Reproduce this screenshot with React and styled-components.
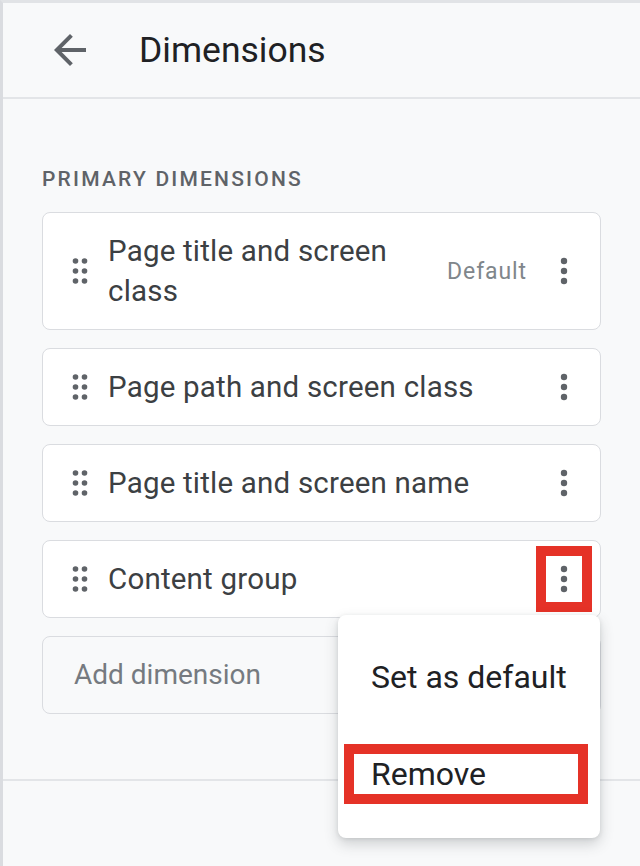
import React from "react";
import styled, { createGlobalStyle } from "styled-components";

const GlobalStyle = createGlobalStyle`
  html, body {
    margin: 0;
    padding: 0;
    background: #f8f9fa;
  }
  body {
    font-family: Roboto, "Liberation Sans", Arial, sans-serif;
    -webkit-font-smoothing: antialiased;
  }
  * { box-sizing: border-box; }
`;

const Page = styled.div`
  min-height: 866px;
  background: #f8f9fa;
  border-top: 3px solid #e1e3e6;
  border-left: 3px solid #dadce0;
`;

const Header = styled.div`
  display: flex;
  align-items: center;
  height: 96px;
  padding-left: 43px;
  border-bottom: 2px solid #e3e5e8;
`;

const BackButton = styled.button`
  display: flex;
  align-items: center;
  justify-content: center;
  width: 48px;
  height: 48px;
  padding: 0;
  border: none;
  background: none;
  color: #5f6368;
  cursor: pointer;
`;

const Title = styled.h1`
  margin: 0 0 0 45px;
  font-size: 35.5px;
  font-weight: 400;
  color: #202124;
`;

const Body = styled.div`
  padding: 68px 39px 65px;
  border-bottom: 2px solid #e3e5e8;
`;

const SectionLabel = styled.div`
  font-size: 21px;
  line-height: 24px;
  font-weight: 500;
  letter-spacing: 2.2px;
  color: #5f6368;
  margin-bottom: 21px;
`;

const List = styled.div`
  display: flex;
  flex-direction: column;
  gap: 18px;
`;

const Card = styled.div`
  position: relative;
  display: flex;
  align-items: center;
  min-height: 78px;
  padding: 0 8px 0 25px;
  background: ${(p) => (p.ghost ? "transparent" : "#fff")};
  border: 1px solid #dadce0;
  border-radius: 8px;
`;

const Handle = styled.span`
  display: flex;
  flex-shrink: 0;
  color: #5f6368;
  margin-right: 16px;
`;

const Label = styled.div`
  flex: 1;
  font-size: 29.5px;
  line-height: 40px;
  letter-spacing: 0.2px;
  color: #3c4043;
  padding: 18px 40px 18px 0;
`;

const Placeholder = styled.div`
  font-size: 28px;
  line-height: 40px;
  color: #757a80;
  padding-left: 6px;
`;

const DefaultTag = styled.span`
  font-size: 23px;
  letter-spacing: 0.9px;
  color: #80868b;
  margin-right: 9px;
`;

const Kebab = styled.button`
  display: flex;
  align-items: center;
  justify-content: center;
  flex-shrink: 0;
  width: 56px;
  height: 66px;
  padding: 0;
  background: ${(p) => (p.highlight ? "#fff" : "none")};
  border: 10px solid ${(p) => (p.highlight ? "#e53227" : "transparent")};
  color: #5f6368;
  cursor: pointer;
`;

const Menu = styled.div`
  position: absolute;
  top: calc(100% - 2px);
  right: 0;
  width: 262px;
  padding-bottom: 34px;
  background: #fff;
  border-radius: 8px;
  box-shadow: 0 6px 14px rgba(60, 64, 67, 0.22), 0 1px 4px rgba(60, 64, 67, 0.12);
  z-index: 2;
`;

const MenuItem = styled.div`
  display: flex;
  align-items: center;
  height: ${(p) => (p.highlight ? "60px" : "124px")};
  margin: ${(p) => (p.highlight ? "5px 12px 0 6px" : "0")};
  padding-left: ${(p) => (p.highlight ? "17px" : "33px")};
  border: ${(p) => (p.highlight ? "10px solid #e53227" : "none")};
  font-size: 32px;
  color: #202124;
`;

const ArrowBack = () => (
  <svg width="48" height="48" viewBox="0 0 24 24" fill="currentColor">
    <path d="M20 11H7.83l5.59-5.59L12 4l-8 8 8 8 1.41-1.41L7.83 13H20v-2z" />
  </svg>
);

const DragDots = () => (
  <svg width="24" height="30" viewBox="0 0 24 30" fill="currentColor">
    {[5, 15, 25].map((y) =>
      [7.5, 16.5].map((x) => <circle key={`${x}-${y}`} cx={x} cy={y} r="2.8" />)
    )}
  </svg>
);

const MoreVert = () => (
  <svg width="12" height="32" viewBox="0 0 12 32" fill="currentColor">
    <circle cx="6" cy="6" r="3.2" />
    <circle cx="6" cy="16" r="3.2" />
    <circle cx="6" cy="26" r="3.2" />
  </svg>
);

const dimensions = [
  { name: "Page title and screen class", isDefault: true },
  { name: "Page path and screen class" },
  { name: "Page title and screen name" },
  { name: "Content group", menuOpen: true },
];

const App = () => {
  return (
    <>
      <GlobalStyle />
      <Page>
        <Header>
          <BackButton>
            <ArrowBack />
          </BackButton>
          <Title>Dimensions</Title>
        </Header>
        <Body>
          <SectionLabel>PRIMARY DIMENSIONS</SectionLabel>
          <List>
            {dimensions.map((item, i) => (
              <Card key={i}>
                <Handle>
                  <DragDots />
                </Handle>
                <Label>{item.name}</Label>
                {item.isDefault && <DefaultTag>Default</DefaultTag>}
                <Kebab highlight={item.menuOpen}>
                  <MoreVert />
                </Kebab>
                {item.menuOpen && (
                  <Menu>
                    <MenuItem>Set as default</MenuItem>
                    <MenuItem highlight>Remove</MenuItem>
                  </Menu>
                )}
              </Card>
            ))}
            <Card ghost>
              <Placeholder>Add dimension</Placeholder>
            </Card>
          </List>
        </Body>
      </Page>
    </>
  );
};

export default App;
